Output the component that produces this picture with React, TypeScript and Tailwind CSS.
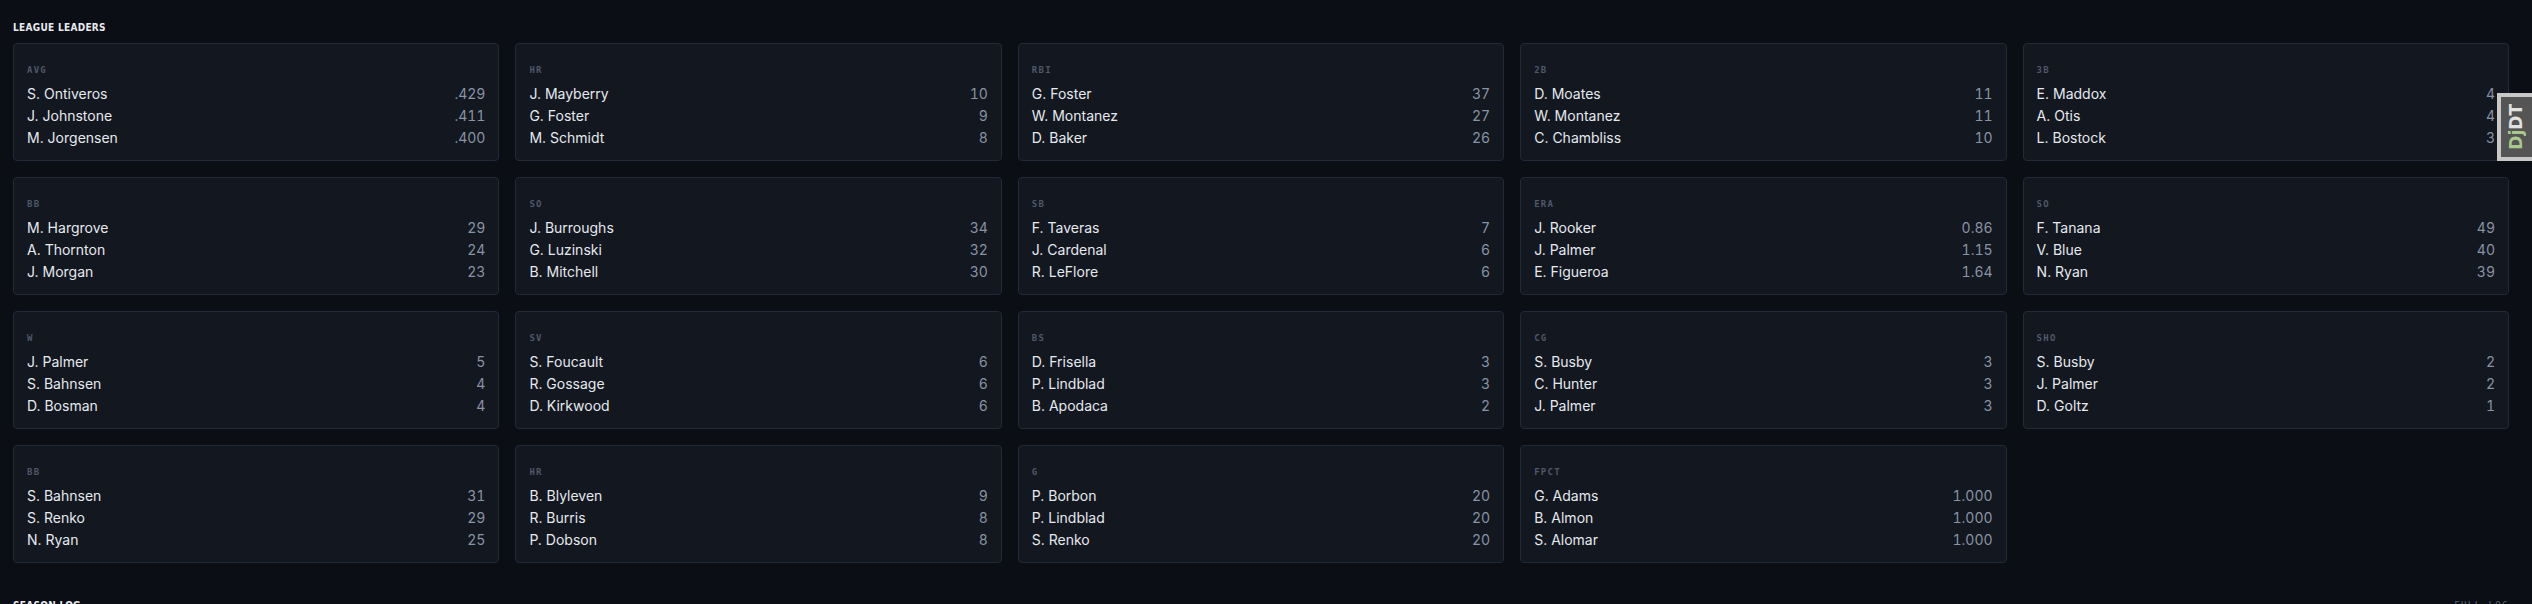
import React from "react";

type Leader = { name: string; value: string };
type Category = { label: string; leaders: Leader[] };

const d = (label: string, rows: [string, string][]): Category => ({
  label,
  leaders: rows.map(([name, value]) => ({ name, value })),
});

const categories: Category[] = [
  d("AVG", [["S. Ontiveros", ".429"], ["J. Johnstone", ".411"], ["M. Jorgensen", ".400"]]),
  d("HR", [["J. Mayberry", "10"], ["G. Foster", "9"], ["M. Schmidt", "8"]]),
  d("RBI", [["G. Foster", "37"], ["W. Montanez", "27"], ["D. Baker", "26"]]),
  d("2B", [["D. Moates", "11"], ["W. Montanez", "11"], ["C. Chambliss", "10"]]),
  d("3B", [["E. Maddox", "4"], ["A. Otis", "4"], ["L. Bostock", "3"]]),
  d("BB", [["M. Hargrove", "29"], ["A. Thornton", "24"], ["J. Morgan", "23"]]),
  d("SO", [["J. Burroughs", "34"], ["G. Luzinski", "32"], ["B. Mitchell", "30"]]),
  d("SB", [["F. Taveras", "7"], ["J. Cardenal", "6"], ["R. LeFlore", "6"]]),
  d("ERA", [["J. Rooker", "0.86"], ["J. Palmer", "1.15"], ["E. Figueroa", "1.64"]]),
  d("SO", [["F. Tanana", "49"], ["V. Blue", "40"], ["N. Ryan", "39"]]),
  d("W", [["J. Palmer", "5"], ["S. Bahnsen", "4"], ["D. Bosman", "4"]]),
  d("SV", [["S. Foucault", "6"], ["R. Gossage", "6"], ["D. Kirkwood", "6"]]),
  d("BS", [["D. Frisella", "3"], ["P. Lindblad", "3"], ["B. Apodaca", "2"]]),
  d("CG", [["S. Busby", "3"], ["C. Hunter", "3"], ["J. Palmer", "3"]]),
  d("SHO", [["S. Busby", "2"], ["J. Palmer", "2"], ["D. Goltz", "1"]]),
  d("BB", [["S. Bahnsen", "31"], ["S. Renko", "29"], ["N. Ryan", "25"]]),
  d("HR", [["B. Blyleven", "9"], ["R. Burris", "8"], ["P. Dobson", "8"]]),
  d("G", [["P. Borbon", "20"], ["P. Lindblad", "20"], ["S. Renko", "20"]]),
  d("FPCT", [["G. Adams", "1.000"], ["B. Almon", "1.000"], ["S. Alomar", "1.000"]]),
];

function Card({ cat }: { cat: Category }) {
  return (
    <div className="rounded-[4px] border border-[#232937] bg-[#121720] px-[13px] pt-[19px] pb-[11px]">
      <div className="mb-[6px] h-[14px] font-['DejaVu_Sans_Mono',monospace] text-[9px] font-bold leading-[14px] tracking-[0.14em] text-[#505869]">
        {cat.label}
      </div>
      {cat.leaders.map((l, i) => (
        <div
          key={i}
          className="flex h-[22px] items-center justify-between font-['Inter',sans-serif] text-[14px] leading-[22px]"
        >
          <span className="text-[#e6e9ee]">{l.name}</span>
          <span className="tabular-nums text-[#8a93a3]">{l.value}</span>
        </div>
      ))}
    </div>
  );
}

export default function App() {
  return (
    <div className="relative min-h-screen overflow-hidden bg-[#0b0e15] pl-[13px] pr-[23px] pt-[20px]">
      <div className="mb-[7px] h-[16px] font-['DejaVu_Sans_Condensed','DejaVu_Sans',sans-serif] text-[10px] font-bold leading-[16px] tracking-[0.03em] text-[#e8ebf0] [font-stretch:condensed]">
        LEAGUE LEADERS
      </div>
      <div className="grid grid-cols-5 gap-[16px]">
        {categories.map((c, i) => (
          <Card key={i} cat={c} />
        ))}
      </div>
      <div className="mt-[35px] flex h-[16px] items-center justify-between">
        <div className="font-['DejaVu_Sans_Condensed','DejaVu_Sans',sans-serif] text-[10px] font-bold leading-[16px] tracking-[0.03em] text-[#e8ebf0] [font-stretch:condensed]">
          SEASON LOG
        </div>
        <div className="font-['DejaVu_Sans_Mono',monospace] text-[9px] tracking-[0.16em] text-[#5b6476]">
          FULL LOG
        </div>
      </div>

      <div className="absolute right-0 top-[93px] flex h-[68px] w-[35px] items-center justify-center border-4 border-r-0 border-[#c8c8c8] bg-[#555555]">
        <span className="rotate-180 font-['DejaVu_Sans',sans-serif] text-[17px] font-bold leading-none [writing-mode:vertical-rl]">
          <span className="text-[#a9c98c]">Dj</span>
          <span className="text-[#e2e2e2]">DT</span>
        </span>
      </div>
    </div>
  );
}
